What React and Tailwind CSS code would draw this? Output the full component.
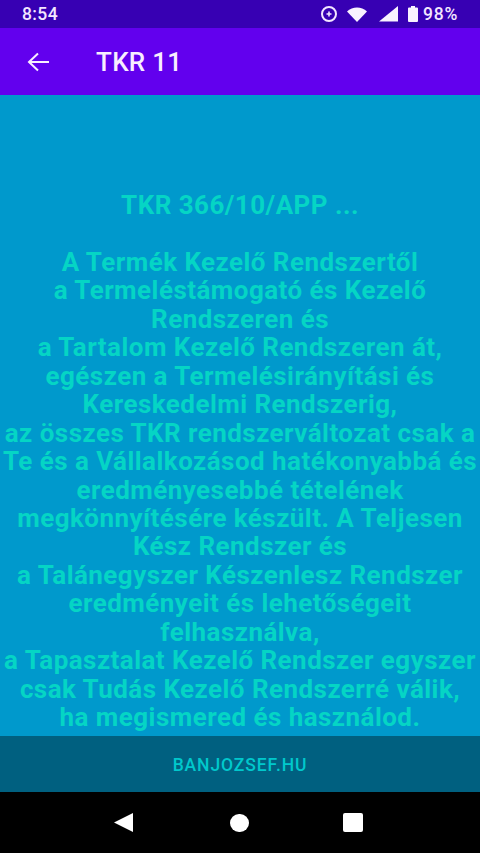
const LINES = [
  "TKR 366/10/APP ...",
  "",
  "A Termék Kezelő Rendszertől",
  "a Termeléstámogató és Kezelő Rendszeren és",
  "a Tartalom Kezelő Rendszeren át,",
  "egészen a Termelésirányítási és Kereskedelmi Rendszerig,",
  "az összes TKR rendszerváltozat csak a Te és a Vállalkozásod hatékonyabbá és eredményesebbé tételének megkönnyítésére készült. A Teljesen Kész Rendszer és",
  "a Talánegyszer Készenlesz Rendszer eredményeit és lehetőségeit felhasználva,",
  "a Tapasztalat Kezelő Rendszer egyszer csak Tudás Kezelő Rendszerré válik,",
  "ha megismered és használod.",
];

function StatusBar() {
  return (
    <div className="h-[28px] bg-[#3700b3] flex items-center justify-between pl-[22px] pr-[22px] text-[#f3e6ff] text-[17.5px] font-medium tracking-[0.4px]">
      <span>8:54</span>
      <div className="flex items-center">
        <svg width="18" height="18" viewBox="0 0 18 18" fill="none" className="mr-[9px]">
          <circle cx="9" cy="9" r="7" stroke="#f3e6ff" strokeWidth="2" />
          <path d="M6.500 9h5M9 6.500v5" stroke="#f3e6ff" strokeWidth="1.600" />
        </svg>
        <svg width="20" height="15" viewBox="0 0 20 15" className="mr-[12px]">
          <path d="M0 4.5C5.5 -1 14.500 -1 20 4.500L10 15Z" fill="#f9f2ff" />
        </svg>
        <svg width="19" height="16" viewBox="0 0 19 16" className="mr-[10px]">
          <path d="M0 15.500L19 0V15.500Z" fill="#f9f2ff" />
        </svg>
        <svg width="10" height="16" viewBox="0 0 10 16" className="mr-[5px]">
          <path d="M3 0h4v1.500h2a1 1 0 0 1 1 1V15a1 1 0 0 1-1 1H1a1 1 0 0 1-1-1V2.500a1 1 0 0 1 1-1h2Z" fill="#f9f2ff" />
        </svg>
        <span className="tracking-[0.7px] text-[17.5px]">98%</span>
      </div>
    </div>
  );
}

function AppBar() {
  return (
    <div className="h-[67px] bg-[#6200ee] flex items-center pl-[27px] text-[#f8eeff]">
      <svg width="23" height="20" viewBox="0 0 23 20" fill="none" stroke="currentColor" strokeWidth="2" className="mt-[1px]">
        <path d="M22 10H2M11 1.500L2 10l9 8.500" />
      </svg>
      <span className="ml-[46px] mt-[2px] text-[26px] font-medium tracking-[0.3px]">TKR 11</span>
    </div>
  );
}

function NavBar() {
  return (
    <div className="h-[61px] bg-black flex items-center pl-[114px]">
      <svg width="19" height="19" viewBox="0 0 19 19">
        <path d="M19 0V19L0 9.500Z" fill="#fff" />
      </svg>
      <div className="ml-[97px] w-[19px] h-[18px] rounded-full bg-white" />
      <div className="ml-[94px] w-[20px] h-[19px] rounded-[2px] bg-white" />
    </div>
  );
}

export default function App() {
  return (
    <div className="w-[480px] h-[853px] flex flex-col overflow-hidden font-['Roboto',sans-serif]">
      <StatusBar />
      <AppBar />
      <div className="flex-1 bg-[#0099cc] pt-[96px] text-center text-[26px] tracking-[0.45px] leading-[28.45px] font-bold text-[#05d5c5]">
        {LINES.map((line, i) => (
          <div key={i} className="min-h-[28.45px]">{line}</div>
        ))}
      </div>
      <div className="h-[56px] pt-[2px] bg-[#006080] flex items-center justify-center text-[#00c8cc] text-[17.5px] font-medium tracking-[0.9px]">
        BANJOZSEF.HU
      </div>
      <NavBar />
    </div>
  );
}
